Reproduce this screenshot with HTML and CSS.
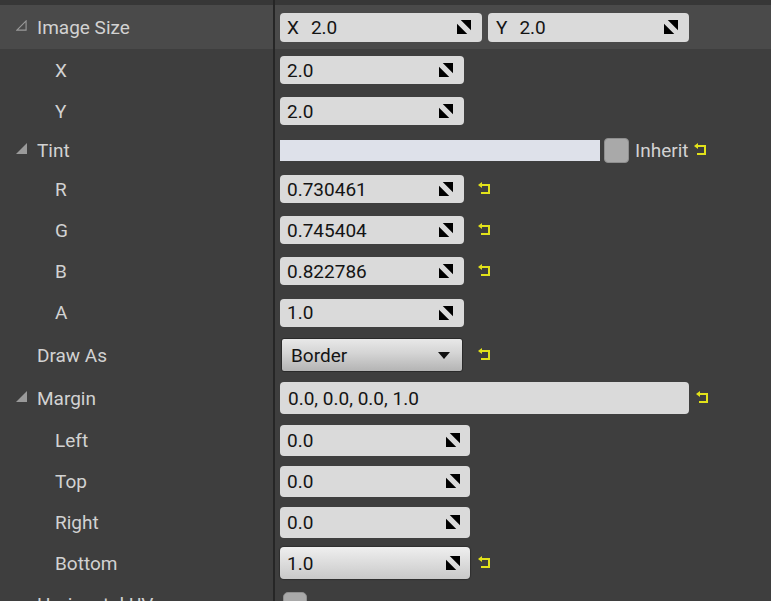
FILE: index.html
```html
<!DOCTYPE html>
<html>
<head>
<meta charset="utf-8">
<link rel="stylesheet" href="styles.css">
</head>
<body>
<svg width="0" height="0" class="defs">
  <defs>
    <symbol id="spin" viewBox="0 0 15 15">
      <polygon points="4,0 15,0 15,11" fill="#000"/>
      <polygon points="0,4 0,15 11,15" fill="#000"/>
    </symbol>
    <symbol id="reset" viewBox="0 0 14 14">
      <polygon points="0,3 4,0 4,6" fill="#e2e21a"/>
      <path d="M3 3 H11 V11 H3" fill="none" stroke="#e2e21a" stroke-width="2"/>
    </symbol>
  </defs>
</svg>
<div class="panel">
  <div class="topstrip"><div class="name"></div><div class="val"></div></div>

  <div class="row hi h44">
    <div class="name l0"><svg class="tri" viewBox="0 0 12 12"><polygon points="11,1 11,11 1,11" fill="none" stroke="#9a9a9a" stroke-width="1.2"/></svg>Image Size</div>
    <div class="val">
      <div class="num wide"><span><span class="axis">X</span>2.0</span><svg class="ic"><use href="#spin"/></svg></div>
      <div class="num wide2"><span><span class="axis">Y</span>2.0</span><svg class="ic"><use href="#spin"/></svg></div>
    </div>
  </div>

  <div class="row h42"><div class="name l1">X</div><div class="val"><div class="num"><span>2.0</span><svg class="ic"><use href="#spin"/></svg></div></div></div>
  <div class="row h40"><div class="name l1">Y</div><div class="val"><div class="num"><span>2.0</span><svg class="ic"><use href="#spin"/></svg></div></div></div>

  <div class="row h38">
    <div class="name l0"><svg class="tri" viewBox="0 0 12 12"><polygon points="12,0 12,12 0,12" fill="#9a9a9a"/></svg>Tint</div>
    <div class="val">
      <div class="colorbar"></div>
      <div class="check"></div>
      <span class="inherit">Inherit</span>
      <svg class="rs"><use href="#reset"/></svg>
    </div>
  </div>

  <div class="row h40"><div class="name l1">R</div><div class="val"><div class="num"><span>0.730461</span><svg class="ic"><use href="#spin"/></svg></div><svg class="rs after"><use href="#reset"/></svg></div></div>
  <div class="row h42"><div class="name l1">G</div><div class="val"><div class="num"><span>0.745404</span><svg class="ic"><use href="#spin"/></svg></div><svg class="rs after"><use href="#reset"/></svg></div></div>
  <div class="row h40"><div class="name l1">B</div><div class="val"><div class="num"><span>0.822786</span><svg class="ic"><use href="#spin"/></svg></div><svg class="rs after"><use href="#reset"/></svg></div></div>
  <div class="row h43"><div class="name l1">A</div><div class="val"><div class="num"><span>1.0</span><svg class="ic"><use href="#spin"/></svg></div></div></div>

  <div class="row h42">
    <div class="name l0">Draw As</div>
    <div class="val">
      <div class="combo"><span>Border</span><svg class="arrow" viewBox="0 0 12 7"><polygon points="0,0 12,0 6,7" fill="#111"/></svg></div>
      <svg class="rs after2"><use href="#reset"/></svg>
    </div>
  </div>

  <div class="row h44">
    <div class="name l0"><svg class="tri" viewBox="0 0 12 12"><polygon points="12,0 12,12 0,12" fill="#9a9a9a"/></svg>Margin</div>
    <div class="val">
      <div class="text"><span>0.0, 0.0, 0.0, 1.0</span></div>
      <svg class="rs after3"><use href="#reset"/></svg>
    </div>
  </div>

  <div class="row h40"><div class="name l1">Left</div><div class="val"><div class="num m"><span>0.0</span><svg class="ic"><use href="#spin"/></svg></div></div></div>
  <div class="row h42"><div class="name l1">Top</div><div class="val"><div class="num m"><span>0.0</span><svg class="ic"><use href="#spin"/></svg></div></div></div>
  <div class="row h40"><div class="name l1">Right</div><div class="val"><div class="num m"><span>0.0</span><svg class="ic"><use href="#spin"/></svg></div></div></div>
  <div class="row h42"><div class="name l1">Bottom</div><div class="val"><div class="num m hover"><span>1.0</span><svg class="ic"><use href="#spin"/></svg></div><svg class="rs after4"><use href="#reset"/></svg></div></div>

  <div class="row h40 last"><div class="name l0">Horizontal UV</div><div class="val top"><div class="check small"></div></div></div>
</div>
</body>
</html>
```
FILE: styles.css
```css
html, body {
  margin: 0;
  padding: 0;
  background: #3e3e3e;
  overflow: hidden;
}
.defs {
  position: absolute;
  width: 0;
  height: 0;
}
.panel {
  width: 771px;
  height: 601px;
  overflow: hidden;
  font-family: Roboto, "Noto Sans", sans-serif;
  font-size: 19px;
  color: #d2d2d2;
}
.topstrip {
  display: flex;
  height: 5px;
  background: #373737;
}
.row {
  display: flex;
  align-items: stretch;
}
.row.hi {
  background: #4a4a4a;
}
.h38 { height: 38px; }
.h40 { height: 40px; }
.h42 { height: 42px; }
.h43 { height: 43px; }
.h44 { height: 44px; }
.name {
  width: 275px;
  flex: none;
  box-sizing: border-box;
  border-right: 2px solid #262626;
  display: flex;
  align-items: center;
  white-space: nowrap;
}
.topstrip .name {
  height: 5px;
}
.name.l0 {
  padding-left: 37px;
  position: relative;
}
.name.l1 {
  padding-left: 55px;
}
.tri {
  position: absolute;
  left: 16px;
  top: 50%;
  width: 11px;
  height: 11px;
  margin-top: -7px;
}
.val {
  flex: 1;
  display: flex;
  align-items: center;
  padding-left: 5px;
}
.val.top {
  align-items: flex-start;
}
.num {
  box-sizing: border-box;
  width: 184px;
  height: 28px;
  background: #dadada;
  border-radius: 4px;
  display: flex;
  align-items: center;
  justify-content: space-between;
  padding: 0 11px 0 7px;
  color: #141414;
  white-space: nowrap;
}
.num.wide {
  width: 202px;
  height: 29px;
}
.num.wide2 {
  width: 201px;
  height: 29px;
  margin-left: 6px;
  padding-left: 8px;
}
.num.m {
  width: 190px;
  height: 31px;
  padding-right: 10px;
}
.num.hover {
  height: 32px;
  background: linear-gradient(#efefef, #c9c9c9);
  box-shadow: 0 0 1px 1px rgba(0,0,0,0.25);
}
.axis {
  margin-right: 12px;
}
.ic {
  width: 14px;
  height: 14px;
  flex: none;
}
.colorbar {
  width: 320px;
  height: 21px;
  background: #dee1ea;
}
.check {
  width: 25px;
  height: 25px;
  background: #a9a9a9;
  border-radius: 4px;
  margin-left: 4px;
  box-sizing: border-box;
  border: 1px solid #8e8e8e;
}
.check.small {
  width: 24px;
  height: 24px;
  margin-left: 3px;
  margin-top: 8px;
  border-radius: 5px;
}
.inherit {
  margin-left: 6px;
  color: #d2d2d2;
}
.rs {
  width: 14px;
  height: 14px;
  flex: none;
  margin-left: 6px;
}
.rs.after { margin-left: 14px; }
.rs.after2 { margin-left: 15px; }
.rs.after3 { margin-left: 7px; }
.rs.after4 { margin-left: 8px; }
.combo {
  box-sizing: border-box;
  width: 182px;
  height: 34px;
  margin-left: 1px;
  border: 1px solid #2a2a2a;
  border-radius: 3px;
  background: linear-gradient(#e8e8e8, #d4d4d4 45%, #b4b4b4);
  display: flex;
  align-items: center;
  justify-content: space-between;
  padding: 0 12px 0 9px;
  color: #141414;
}
.arrow {
  width: 12px;
  height: 7px;
}
.text {
  box-sizing: border-box;
  width: 409px;
  height: 32px;
  background: #dadada;
  border-radius: 4px;
  display: flex;
  align-items: center;
  padding-left: 8px;
  color: #141414;
}
```
